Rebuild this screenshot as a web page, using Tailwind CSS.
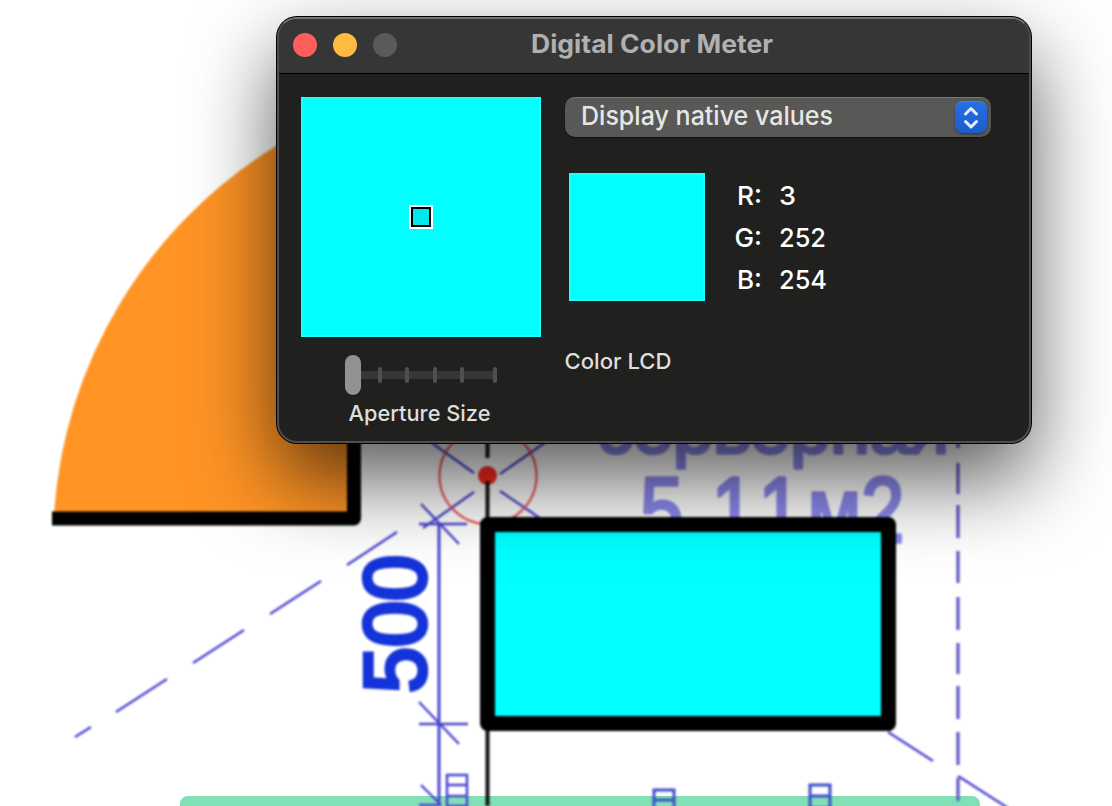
<!DOCTYPE html>
<html lang="en">
<head>
<meta charset="utf-8">
<title>Digital Color Meter</title>
<script src="https://cdn.jsdelivr.net/npm/@tailwindcss/browser@4"></script>
</head>
<body class="relative h-[806px] w-[1112px] overflow-hidden bg-white font-['Inter','Liberation_Sans',sans-serif]">
  <!-- floor plan -->
  <svg class="block h-[806px] w-[1112px]" viewBox="0 0 1112 806" fill="none">
    <path d="M180 806v-2a8 8 0 0 1 8-8H972a8 8 0 0 1 8 8v2z" fill="#82e0b6"/>
    <g class="blur-[0.8px]">
      <path d="M54 514A468 468 0 0 1 276 146L300 133H354V518z" fill="#ff9425"/>
      <path d="M52 518.500H354V400" stroke="#000" stroke-width="14" stroke-linejoin="round"/>
      <g fill="#8d8aee" stroke="#8d8aee" stroke-width="3.500" stroke-linejoin="round" font-family="Liberation Sans, sans-serif">
        <text x="597" y="453" font-size="72" textLength="352" lengthAdjust="spacing">серверная</text>
        <text transform="translate(640 542) scale(.85 1)" x="0 66 84 139 197 260" y="0" font-size="92">5.11м2</text>
      </g>
      <g stroke="#4a46cf" stroke-width="2.400">
        <path d="M75 737l16-10M116 712l51-33M193 663l51-33M270 614l51-33M347 565l50-33M423 528l51-36M500 474l50-35M432 443l42 30M500 491l53 36M888 732l45 29M958 776l50 32"/>
        <path d="M958 440v8M958 463v31M958 505v33M958 551v32M958 597v33M958 643v31M958 686v33M958 732v33M958 778v23" stroke-width="3.500" stroke="#6a63c9"/>
        <path d="M439 524V806" stroke-width="3"/>
        <path d="M419 524h48M419 724h49M419 805h22M421 504l38 40M419 702l40 42M421 785l20 20"/>
        <path d="M447 775h20v31h-20zM447 785h20M447 796h20" stroke-width="2.500"/>
        <path d="M654 790h20v20h-20zM654 800h20M810 785h20v23h-20zM810 796h20" stroke-width="3" stroke="#3d4fca"/>
      </g>
      <ellipse cx="488" cy="476" rx="48.500" ry="48" stroke="#f04848" stroke-width="2"/>
      <circle cx="487.500" cy="475.500" r="9.500" fill="#ff2a1e"/>
      <path d="M487.500 440v18M487.500 481v40M487.500 728v78" stroke="#111" stroke-width="4"/>
      <text transform="translate(425 693) rotate(-90)" font-family="Liberation Sans, sans-serif" font-size="87" fill="#1433d8" stroke="#1433d8" stroke-width="4.500" textLength="138" lengthAdjust="spacingAndGlyphs">500</text>
      <rect x="487.500" y="524.500" width="401" height="199" fill="#00ffff" stroke="#000" stroke-width="15" stroke-linejoin="round"/>
    </g>
  </svg>

  <!-- floating window -->
  <main class="absolute left-[277px] top-[17px] flex h-[426px] w-[754px] flex-col overflow-hidden rounded-[20px] border-2 border-[#4e4e4d] border-t-[#737373] bg-[#20201e] shadow-[0_0_0_1px_#000,0_36px_84px_rgba(0,0,0,0.66)]">
    <header class="relative flex h-[55px] shrink-0 items-center gap-4 border-b border-black bg-[#363636] pb-0.5 pl-[14px]">
      <span class="size-6 rounded-full bg-[#ff5f5b]"></span>
      <span class="size-6 rounded-full bg-[#ffbb40]"></span>
      <span class="size-6 rounded-full bg-[#5a5a5a]"></span>
      <svg class="ml-[117px] h-10 w-[246px]"><text x="1" y="28" font-size="25" font-weight="700" fill="#b0b0b0" textLength="242" lengthAdjust="spacingAndGlyphs">Digital Color Meter</text></svg>
    </header>
    <div class="flex pl-[22px] pt-[23px]">
      <section class="flex w-60 flex-col">
        <div class="flex size-60 items-center justify-center border-2 border-[#20ffff] bg-[#00ffff]">
          <div class="size-6 border-2 border-white bg-black p-[2px]"><div class="size-full bg-[#00e8ee]"></div></div>
        </div>
        <svg class="mt-4 h-[46px] w-60" viewBox="0 0 240 46">
          <path d="M52 22H194" stroke="#373736" stroke-width="8"/>
          <path d="M79 16v12M106 16v12M134 16v12M161 16v12M194 16v12" stroke="#50504f" stroke-width="4" stroke-linecap="round"/>
          <rect x="44" y="3" width="16" height="40" rx="8" fill="#111"/>
          <rect x="44" y="2" width="16" height="40" rx="8" fill="#929292"/>
        </svg>
        <svg class="h-8 w-60"><text x="47.500" y="22" font-size="22" font-weight="500" fill="#dededd" textLength="142" lengthAdjust="spacingAndGlyphs">Aperture Size</text></svg>
      </section>
      <section class="ml-6 flex w-[426px] flex-col">
        <div class="flex h-10 items-start justify-between rounded-[10px] border-t border-[#777] bg-[#585856] pr-1 shadow-[0_1px_1px_#111]">
          <svg class="h-[39px] w-[300px]"><text x="16" y="27" font-size="26" font-weight="500" fill="#e6e6e5" textLength="252" lengthAdjust="spacingAndGlyphs">Display native values</text></svg>
          <span class="mt-[3px] flex size-8 items-center justify-center rounded-lg border-t border-[#4386ef] bg-linear-to-b from-[#246fe5] to-[#1b5dcc] shadow-[0_1px_2px_#333]">
            <svg class="size-8" viewBox="0 0 32 32" fill="none" stroke="#e5edfc" stroke-width="3" stroke-linecap="round" stroke-linejoin="round"><path d="M10.500 12L16 6.500 21.500 12M10.500 19.500L16 25l5.500-5.500"/></svg>
          </span>
        </div>
        <div class="ml-1 mt-9 flex">
          <div class="h-32 w-34 border-2 border-[#20ffff] bg-[#00ffff]"></div>
          <svg class="h-32 w-[150px]" font-size="26" font-weight="500" fill="#fff">
            <text x="32" y="32" textLength="25" lengthAdjust="spacingAndGlyphs">R:</text><text x="74" y="32" textLength="17" lengthAdjust="spacingAndGlyphs">3</text>
            <text x="29.500" y="74" textLength="27.500" lengthAdjust="spacingAndGlyphs">G:</text><text x="74" y="74" textLength="47" lengthAdjust="spacingAndGlyphs">252</text>
            <text x="32" y="116" textLength="25" lengthAdjust="spacingAndGlyphs">B:</text><text x="74" y="116" textLength="48" lengthAdjust="spacingAndGlyphs">254</text>
          </svg>
        </div>
        <svg class="mt-[44px] h-8 w-[200px]"><text x="-0.500" y="24" font-size="22" font-weight="500" fill="#dededd" textLength="107" lengthAdjust="spacingAndGlyphs">Color LCD</text></svg>
      </section>
    </div>
  </main>
</body>
</html>
